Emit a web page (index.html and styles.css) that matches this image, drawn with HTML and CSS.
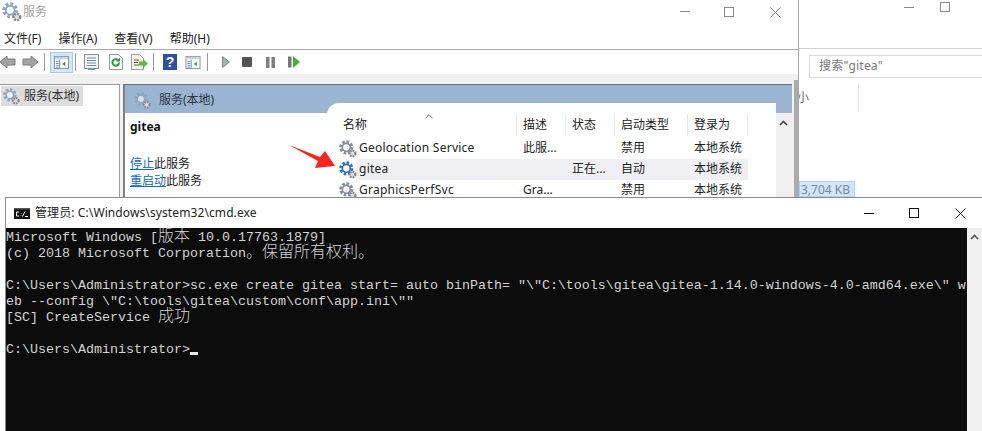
FILE: index.html
```html
<!DOCTYPE html>
<html lang="zh-CN">
<head>
<meta charset="utf-8">
<title>gitea</title>
<link rel="stylesheet" href="styles.css">
</head>
<body>
<svg class="defs" width="0" height="0" aria-hidden="true">
  <defs>
    <symbol id="gear" viewBox="0 0 16 16">
      <circle cx="6.500" cy="6.500" r="4.800" fill="none" stroke="currentColor" stroke-width="3" stroke-dasharray="2.200 1.500"/>
      <circle cx="6.500" cy="6.500" r="3.500" fill="#fff" fill-opacity=".6" stroke="currentColor" stroke-width="1.400"/>
      <circle cx="12" cy="12" r="2.600" fill="#ddd" stroke="#858585" stroke-width="2" stroke-dasharray="1.500 .9"/>
    </symbol>
    <symbol id="pane" viewBox="0 0 16 16">
      <rect x=".5" y="1.500" width="15" height="13" fill="#fff" stroke="#8c8c8c"/>
      <rect x="1" y="2" width="14" height="2.500" fill="#c9d3de"/>
      <path d="M6 5v9M2 7h3M2 9h3M2 11h3M2 13h3" stroke="#5b89b8" fill="none"/>
      <path d="M12 7v5l-3-2.500z" fill="#2e9a3b"/>
    </symbol>
  </defs>
</svg>
<main class="desktop">
  <section class="back-window">
    <div class="back-controls">
      <span class="ctl-min"></span>
      <span class="ctl-max"></span>
    </div>
    <div class="back-search-row">
      <div class="search-box">搜索"gitea"</div>
    </div>
    <div class="back-list">
      <div class="back-head"><span class="back-col">小</span></div>
      <div class="back-size"><span>3,704 KB</span></div>
    </div>
  </section>

  <section class="svc-window">
    <header class="svc-title">
      <svg class="title-gear"><use href="#gear"/></svg>
      <span class="svc-title-text">服务</span>
      <div class="svc-controls">
        <span class="ctl-min"></span>
        <span class="ctl-max"></span>
        <svg class="ctl-close" viewBox="0 0 11 11"><path d="M.5.500l10 10M10.500.500l-10 10" stroke="#777" fill="none"/></svg>
      </div>
    </header>
    <nav class="menu">
      <span>文件(F)</span><span>操作(A)</span><span>查看(V)</span><span>帮助(H)</span>
    </nav>
    <div class="toolbar">
      <svg class="tb tb-back" viewBox="0 0 16 14"><path d="M0 7l7-6v3h8v6H7v3z" fill="#a3a3a3" stroke="#7c7c7c"/></svg>
      <svg class="tb tb-fwd" viewBox="0 0 16 14"><path d="M16 7L9 1v3H1v6h8v3z" fill="#a3a3a3" stroke="#7c7c7c"/></svg>
      <i class="tb-sep sep-a"></i>
      <span class="tb-active"><svg class="tb-pane"><use href="#pane"/></svg></span>
      <i class="tb-sep sep-b"></i>
      <svg class="tb tb-list" viewBox="0 0 15 16"><rect x=".5" y=".5" width="14" height="14" fill="#f4f4f4" stroke="#8c8c8c"/><path d="M3 4h9M3 6.500h9M3 9h9M3 11.500h9" stroke="#7b8794" fill="none"/><path d="M4 15.500h7" stroke="#5aa7d8"/></svg>
      <svg class="tb tb-refresh" viewBox="0 0 14 16"><path d="M.5.500h9l4 4v11H.5z" fill="#fbfbfb" stroke="#9a9a9a"/><path d="M10 8.500a3.300 3.300 0 1 1-1-2.400" fill="none" stroke="#2f9a3a" stroke-width="2"/><path d="M11 3.500v4H7z" fill="#2f9a3a"/></svg>
      <svg class="tb tb-export" viewBox="0 0 17 16"><path d="M.5.500h8l4 4v11H.5z" fill="#f8f4e6" stroke="#9a9a9a"/><path d="M3 6h5M3 8.500h4M3 11h5" stroke="#555" fill="none"/><path d="M8 7.500h4V5l5 4.500L12 14v-2.500H8z" fill="#63b946"/></svg>
      <i class="tb-sep sep-c"></i>
      <svg class="tb tb-help" viewBox="0 0 14 16"><rect width="14" height="16" fill="#2d4fa8"/><text class="help-q" x="7" y="13">?</text></svg>
      <svg class="tb-pane2"><use href="#pane"/></svg>
      <i class="tb-sep sep-d"></i>
      <svg class="tb tb-play" viewBox="0 0 8 12"><path d="M.5.500L7.500 6 .5 11.500z" fill="#a8b3a8" stroke="#7f8a7f"/></svg>
      <span class="tb-stop"></span>
      <svg class="tb tb-pause" viewBox="0 0 9 11"><path d="M0 0h3.500v11H0zM5.500 0H9v11H5.500z" fill="#7f7f7f"/></svg>
      <svg class="tb tb-resume" viewBox="0 0 12 12"><path d="M0 .500h3.500v11H0z" fill="#777"/><path d="M5 0l7 6-7 6z" fill="#3fb52f"/></svg>
    </div>
    <div class="svc-body">
      <aside class="tree">
        <div class="tree-item"><svg class="gear-sm"><use href="#gear"/></svg>服务(本地)</div>
      </aside>
      <div class="panel">
        <div class="panel-head"><svg class="gear-sm"><use href="#gear"/></svg><span>服务(本地)</span></div>
        <div class="panel-main">
          <div class="detail">
            <h2>gitea</h2>
            <p class="detail-links"><a>停止</a>此服务</p>
            <p class="detail-links"><a>重启动</a>此服务</p>
          </div>
          <div class="list">
            <div class="row row-head">
              <span class="cell-blank"></span>
              <span class="cell first">名称<svg class="sort" viewBox="0 0 9 5"><path d="M.5 4.500L4.500.500l4 4" fill="none" stroke="#666"/></svg></span>
              <span class="cell">描述</span><span class="cell">状态</span><span class="cell">启动类型</span><span class="cell">登录为</span>
            </div>
            <div class="row">
              <span class="cell-blank"><svg class="gear-row"><use href="#gear"/></svg></span>
              <span class="cell name">Geolocation Service</span><span class="cell">此服...</span><span class="cell"></span><span class="cell">禁用</span><span class="cell">本地系统</span>
            </div>
            <div class="row row-sel">
              <span class="cell-blank"><svg class="gear-row gear-blue"><use href="#gear"/></svg></span>
              <span class="cell name">gitea</span><span class="cell"></span><span class="cell">正在...</span><span class="cell">自动</span><span class="cell">本地系统</span>
            </div>
            <div class="row">
              <span class="cell-blank"><svg class="gear-row"><use href="#gear"/></svg></span>
              <span class="cell name">GraphicsPerfSvc</span><span class="cell">Gra...</span><span class="cell"></span><span class="cell">禁用</span><span class="cell">本地系统</span>
            </div>
          </div>
          <div class="vscroll"><svg class="chev" viewBox="0 0 9 6"><path d="M1 5l3.500-3.500L8 5" fill="none" stroke="#444" stroke-width="1.600"/></svg></div>
        </div>
      </div>
      <div class="edge"></div>
    </div>
  </section>

  <svg class="arrow" viewBox="0 0 48 26"><path d="M0 0L31 12 36 6 46 21 26 23 29 16z" fill="#f5261c"/></svg>

  <section class="cmd-window">
    <header class="cmd-title">
      <svg class="cmd-icon" viewBox="0 0 16 11"><rect width="16" height="11" fill="#111"/><rect y="0" width="16" height="1.500" fill="#555"/><path d="M5 4H2.500v4H5M7 5v.5M7 7.500V8M8.500 8.500L11 3.500M11 8.500h3" fill="none" stroke="#fff"/></svg>
      <span class="cmd-title-text">管理员: C:\Windows\system32\cmd.exe</span>
      <div class="cmd-controls">
        <span class="c-min"></span>
        <span class="c-max"></span>
        <svg class="c-close" viewBox="0 0 11 11"><path d="M.5.500l10 10M10.500.500l-10 10" stroke="#222" fill="none"/></svg>
      </div>
    </header>
    <div class="cmd-body">
      <div class="console">
        <div class="ln">Microsoft Windows [<span class="z">版本</span> 10.0.17763.1879]</div>
        <div class="ln">(c) 2018 Microsoft Corporation<span class="z">。保留所有权利。</span></div>
        <div class="ln"> </div>
        <div class="ln">C:\Users\Administrator&gt;sc.exe create gitea start= auto binPath= "\"C:\tools\gitea\gitea-1.14.0-windows-4.0-amd64.exe\" w</div>
        <div class="ln">eb --config \"C:\tools\gitea\custom\conf\app.ini\""</div>
        <div class="ln">[SC] CreateService <span class="z">成功</span></div>
        <div class="ln"> </div>
        <div class="ln">C:\Users\Administrator&gt;<span class="cursor"></span></div>
      </div>
      <div class="cmd-scroll"><svg class="chev" viewBox="0 0 9 6"><path d="M1 5l3.500-3.500L8 5" fill="none" stroke="#555" stroke-width="1.600"/></svg></div>
    </div>
  </section>
</main>
</body>
</html>
```
FILE: styles.css
```css
* { box-sizing: border-box; }
html, body { margin: 0; padding: 0; background: #fff; }
body { font: 12px/16px "Noto Sans", "Noto Sans CJK SC", sans-serif; color: #2a2a2a; }
.defs { position: absolute; }
.desktop { position: relative; width: 982px; height: 431px; overflow: hidden; background: #fff; }

/* back window */
.back-window { position: absolute; left: 799px; top: 0; right: 0; height: 197px; display: flex; flex-direction: column; }
.back-controls { height: 49px; padding: 2px 0 0 105px; display: flex; gap: 26px; border-bottom: 1px solid #d0d0d0; }
.back-controls .ctl-min { margin-top: 5px; }
.back-controls .ctl-max { margin-top: 0; }
.back-search-row { padding: 6px 0 0 10px; }
.search-box { width: 180px; height: 23px; border: 1px solid #d9d9d9; border-right: 0; padding-left: 9px; line-height: 20px; color: #777; letter-spacing: .2px; }
.back-list { flex: 1; display: flex; flex-direction: column; justify-content: space-between; }
.back-head { height: 28px; margin-top: 6px; width: 60px; border-right: 1px solid #e6e6e6; overflow: hidden; }
.back-col { display: block; margin-left: -2px; color: #666; line-height: 28px; font-size: 12px; }
.back-size { width: 56px; height: 16px; background: #cfe6fb; border: 1px solid #a9d3f7; overflow: hidden; white-space: nowrap; padding-left: 1px; color: #7c8794; line-height: 15px; }
.back-size span { display: inline-block; }

.ctl-min { display: block; width: 10px; height: 1px; background: #888; margin-top: 11px; }
.ctl-max { display: block; width: 10px; height: 10px; border: 1px solid #888; margin-top: 6px; }
.ctl-close { width: 11px; height: 11px; margin-top: 6px; }

/* services window */
.svc-window { position: absolute; left: 0; top: 0; width: 799px; height: 197px; border-right: 1px solid #a8a8a8; display: flex; flex-direction: column; background: #fff; }
.svc-title { height: 30px; flex: none; display: flex; align-items: flex-start; padding: 2px 0 0 2px; }
.title-gear { width: 20px; height: 20px; color: #8ca5c2; margin-right: 1px; }
.svc-title-text { color: #a0a0a0; font-size: 12px; margin-top: 2px; }
.svc-controls { margin-left: auto; display: flex; padding-right: 17px; }
.svc-controls .ctl-min { margin: 9px 34px 0 0; }
.svc-controls .ctl-max { margin: 5px 36px 0 0; }
.svc-controls .ctl-close { margin-top: 5px; }
.menu { height: 20px; flex: none; display: flex; gap: 17px; padding-left: 4px; line-height: 18px; color: #222; border-bottom: 1px solid #ababab; }
.toolbar { height: 24px; flex: none; display: flex; align-items: center; background: #fff; }
.tb { display: block; flex: none; }
.tb-back { width: 16px; height: 14px; }
.tb-fwd { width: 16px; height: 14px; margin-left: 6px; }
.tb-sep { display: block; flex: none; width: 1px; height: 18px; background: #9a9a9a; }
.sep-a { margin-left: 6px; margin-right: 5px; }
.tb-active { flex: none; width: 23px; height: 21px; background: #d5e8fa; border: 1px solid #9fcbf2; display: flex; align-items: center; justify-content: center; }
.tb-pane { width: 15px; height: 15px; }
.sep-b { margin-left: 2px; margin-right: 8px; }
.tb-list { width: 15px; height: 16px; }
.tb-refresh { width: 14px; height: 16px; margin-left: 10px; }
.tb-export { width: 17px; height: 16px; margin-left: 8px; }
.sep-c { margin-left: 5px; margin-right: 9px; }
.tb-help { width: 14px; height: 16px; }
.help-q { font: bold 14px "Liberation Sans", sans-serif; fill: #fff; text-anchor: middle; }
.tb-pane2 { width: 16px; height: 15px; margin-left: 8px; flex: none; }
.sep-d { margin-left: 6px; margin-right: 14px; }
.tb-play { width: 8px; height: 12px; }
.tb-stop { flex: none; width: 10px; height: 10px; background: #555; border-radius: 1px; margin-left: 12px; }
.tb-pause { width: 9px; height: 11px; margin-left: 14px; }
.tb-resume { width: 12px; height: 12px; margin-left: 13px; }

.svc-body { flex: 1; min-height: 0; background: #f0f0f0; padding-top: 10px; display: flex; position: relative; }
.tree { width: 120px; flex: none; background: #fff; border-top: 1px solid #9a9a9a; border-right: 1px solid #a0a0a0; padding: 1px 0 0 1px; }
.tree-item { width: 82px; height: 20px; background: #dcdcdc; display: flex; align-items: center; gap: 4px; padding-left: 2px; color: #333; }
.gear-sm { width: 17px; height: 17px; color: #8ca5c2; flex: none; }
.panel { width: 669px; margin-left: 3px; flex: none; background: #fff; border-left: 2px solid #808080; border-top: 1px solid #6f6f6f; display: flex; flex-direction: column; }
.panel-head { height: 28px; flex: none; background: #9ab4d2; display: flex; align-items: center; gap: 8px; padding: 2px 0 0 9px; color: #2b3440; }
.panel-main { flex: 1; display: flex; min-height: 0; }
.detail { width: 202px; flex: none; padding: 5px 0 0 5px; }
.detail h2 { margin: 0 0 19px; font-size: 12px; line-height: 18px; font-weight: 700; color: #111; }
.detail-links { margin: 0; height: 17px; line-height: 17px; color: #222; }
.detail-links a { color: #1268c4; text-decoration: underline; }
.list { width: 449px; flex: none; margin-top: -10px; background: #fff; border-radius: 12px 0 0 0; padding-top: 11px; position: relative; }
.row { display: grid; grid-template-columns: 30px 160px 49px 49px 73px 60px; height: 21px; line-height: 20px; color: #222; }
.row-head { height: 24px; line-height: 22px; }
.row-head .cell { border-right: 1px solid #e8e8e8; height: 22px; }
.row-head .first { margin-left: -14px; padding-left: 0; position: relative; }
.cell { padding-left: 6px; white-space: nowrap; overflow: hidden; }
.cell.name { padding-left: 2px; letter-spacing: .25px; }
.row-sel .cell { background: #f0eff4; }
.cell-blank { display: flex; justify-content: flex-end; align-items: center; }
.gear-row { width: 18px; height: 18px; color: #7f8ea0; flex: none; }
.gear-blue { color: #2f74c0; }
.sort { position: absolute; left: 82px; top: 0; width: 8px; height: 5px; }
.vscroll { width: 16px; flex: none; background: #f0f0f0; padding: 7px 0 0 3px; }
.chev { display: block; width: 9px; height: 6px; }
.edge { position: absolute; left: 794px; top: 6px; bottom: 0; width: 4px; background: #ababab; }

/* arrow */
.arrow { position: absolute; left: 289px; top: 145px; width: 48px; height: 26px; }

/* cmd window */
.cmd-window { position: absolute; left: 5px; top: 197px; right: 0; bottom: 0; background: #fff; border-top: 1px solid #8a8a8a; border-left: 1px solid #8a8a8a; display: flex; flex-direction: column; }
.cmd-title { height: 30px; flex: none; display: flex; align-items: center; padding-left: 8px; }
.cmd-icon { width: 16px; height: 11px; flex: none; margin-right: 5px; }
.cmd-title-text { color: #222; letter-spacing: .1px; }
.cmd-controls { margin-left: auto; display: flex; align-items: center; padding-right: 16px; }
.c-min { display: block; width: 10px; height: 1px; background: #111; margin-right: 35px; }
.c-max { display: block; width: 10px; height: 10px; border: 1px solid #111; margin-right: 36px; }
.c-close { width: 11px; height: 11px; }
.cmd-body { flex: 1; display: flex; min-height: 0; }
.console { flex: 1; min-width: 0; background: #0c0c0c; color: #d4d4d4; padding-top: 2px; font: 13.33px/16px "Liberation Mono", "Noto Sans CJK SC", monospace; overflow: hidden; }
.ln { height: 16px; white-space: pre; }
.z { font: 300 16px/0 "Noto Sans CJK SC", sans-serif; }
.cursor { display: inline-block; width: 8px; height: 3px; background: #e8e8e8; vertical-align: -2px; }
.cmd-scroll { width: 15px; flex: none; background: #f0f0f0; padding: 6px 0 0 3px; }
```
